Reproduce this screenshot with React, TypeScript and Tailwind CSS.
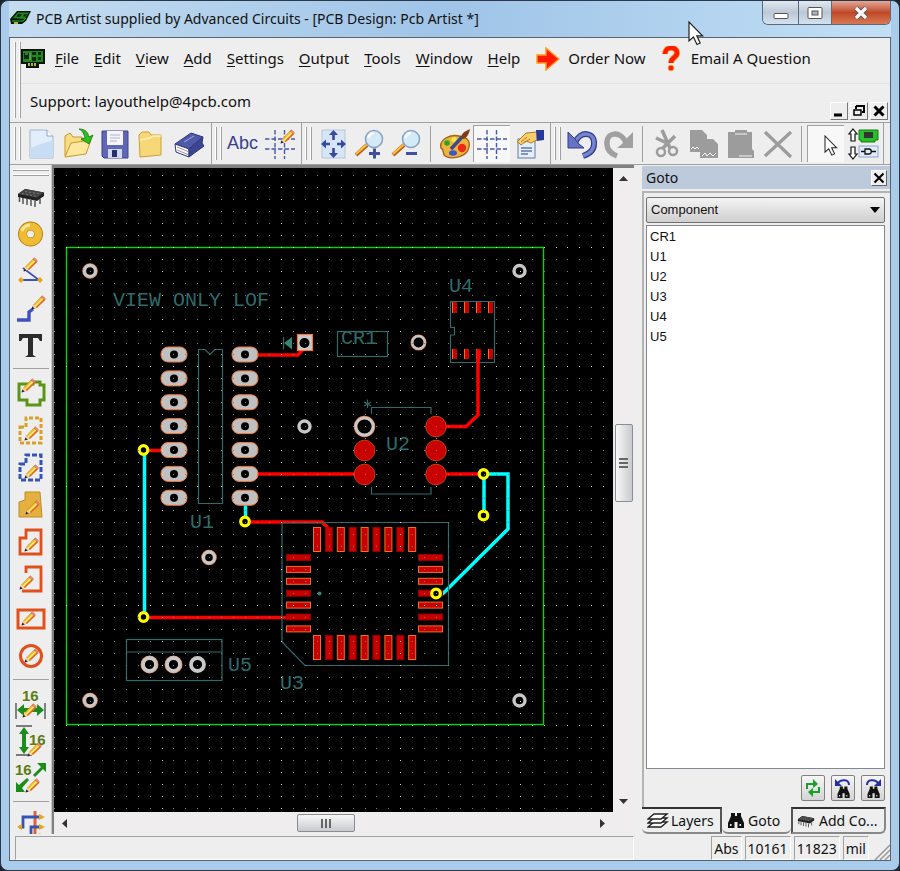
import type { ReactNode } from 'react'

const menuItems = ['File', 'Edit', 'View', 'Add', 'Settings', 'Output', 'Tools', 'Window', 'Help']
const components = ['CR1', 'U1', 'U2', 'U3', 'U4', 'U5']

/* ---------- small shared parts ---------- */

function Grip() {
  return (
    <div className="flex shrink-0 gap-[3px] self-stretch py-1">
      <span className="w-[2px] border-l border-white bg-[#a0a0a0]" />
      <span className="w-[2px] border-l border-white bg-[#a0a0a0]" />
    </div>
  )
}

function Tool({ label, pressed, children }: { label: string; pressed?: boolean; children: ReactNode }) {
  return (
    <button
      type="button"
      aria-label={label}
      className={
        pressed
          ? 'flex h-[37px] w-[37px] shrink-0 items-center justify-center border-t border-l border-[#a0a0a0] bg-[#f8f8f8]'
          : 'flex h-[37px] w-[37px] shrink-0 items-center justify-center'
      }
    >
      <svg width="32" height="32" viewBox="0 0 32 32">{children}</svg>
    </button>
  )
}

function VSep() {
  return <span className="mx-[5px] h-9 w-px shrink-0 bg-[#a0a0a0]" />
}

function HSep() {
  return <span className="my-[5px] h-px w-9 shrink-0 bg-[#a0a0a0]" />
}

/* A pencil with its tip at (x, y), drawn up and to the right */
function Pencil({ x, y }: { x: number; y: number }) {
  return (
    <g transform={`translate(${x} ${y})`}>
      <path d="M0 0 L1.5 -4 L9 -12 L12.5 -9 L4.5 -1.5 Z" fill="#f9c21c" stroke="#c8791a" strokeWidth="0.6" />
      <path d="M3 -2.6 L11 -10.6" stroke="#fff0a0" strokeWidth="1.2" />
      <path d="M4.4 -1.5 L12.4 -9.2" stroke="#e8601c" strokeWidth="1.4" />
      <path d="M9 -12 L10.4 -13.2 L13.6 -10.2 L12.5 -9 Z" fill="#f0907c" stroke="#c8503c" strokeWidth="0.5" />
      <path d="M0 0 L1.5 -4 L4.5 -1.5 Z" fill="#f3d9a8" />
      <path d="M-0.5 0.5 L0.5 -2.4 L2.6 -0.6 Z" fill="#1b1b4a" />
    </g>
  )
}

function Cursor() {
  return <path d="M0 0 V19 L4.4 15 L8 22.5 L11.2 21 L7.8 13.8 H13.6 Z" fill="#fff" stroke="#222" strokeWidth="1.2" />
}

function Chip() {
  return (
    <>
      <path d="M3 13 L10 8 L29 11.5 V15 L22 20 L3 16 Z" fill="#222" />
      <path d="M3 13 L10 8 L29 11.5 L22 16.5 Z" fill="#444" />
      <path d="M4.5 16 V21 M8 17 V23 M12 18 V24 M16 19 V25 M20 20 V26 M25 18 V23" stroke="#555" strokeWidth="1.5" />
      <path d="M7 12.5 L22 15.5 M10 10.5 L26 13" stroke="#888" strokeWidth="0.8" strokeDasharray="2 2" />
    </>
  )
}

function Binoculars() {
  return (
    <path
      d="M5 2 H9 V5 H11 V2 H15 V5 L18 12 V17 H11.5 V11 H8.5 V17 H2 V12 L5 5 Z M4 13 V15 H5.5 V13 Z M13.5 13 V15 H15 V13 Z"
      fill="#111"
      fillRule="evenodd"
    />
  )
}

function DashGrid() {
  return (
    <g stroke="#4858a8" strokeWidth="1.4" strokeDasharray="4.5 2">
      <path d="M11 2 V31" />
      <path d="M20.5 2 V31" />
      <path d="M1 11 H31" />
      <path d="M1 21 H31" />
    </g>
  )
}

function Lens({ plus }: { plus?: boolean }) {
  return (
    <>
      <path d="M2 27 L13 17" stroke="#b8601c" strokeWidth="4" />
      <path d="M2 26 L12.5 16.8" stroke="#ffc23a" strokeWidth="2" />
      <circle cx="20" cy="11" r="8.5" fill="#d4eaf8" stroke="#8aa4c4" strokeWidth="1.6" />
      <path d="M14.5 10 A6 6 0 0 1 20 5" fill="none" stroke="#fff" strokeWidth="2.4" />
      <path d="M15 25.5 H26" stroke="#4050a0" strokeWidth="3" />
      {plus && <path d="M20.5 20.5 V30.5" stroke="#4050a0" strokeWidth="3" />}
    </>
  )
}

/* ---------- title bar ---------- */

function TitleBar() {
  return (
    <header className="relative flex h-9 shrink-0 items-center bg-linear-to-r from-[#c4dcf0] via-[#9fc4e8] to-[#c2dff5] pl-[1px]">
      <svg className="mb-[2px]" width="22" height="16" viewBox="0 0 22 16">
        <path d="M0 9 L7 1 H21 L16 11 L12 14 H1 Z" fill="#0a1a0a" />
        <path d="M3 8 L8 2.5 H19 L14.5 9 Z" fill="#1c8a1c" />
        <path d="M8 4 H12 L10 7 H6.5 Z M14 4 H17 L15.5 6.5 H13 Z" fill="#0a2a0a" />
        <path d="M2 11 H13 L16 8" fill="none" stroke="#22b022" />
        <path d="M4 13 H8" stroke="#e8e030" strokeWidth="1.6" />
      </svg>
      <h1 className="ml-1 truncate pb-[2px] text-[14px] text-[#111]">
        PCB Artist supplied by Advanced Circuits - [PCB Design: Pcb Artist *]
      </h1>
      <div className="ml-auto flex h-6 shrink-0 self-start overflow-hidden rounded-b-md border border-t-0 border-[#5c6a7c]">
        <button type="button" aria-label="Minimize" className="flex w-[35px] items-center justify-center bg-linear-to-b from-[#e0e8f0] via-[#bcc8d6] to-[#d4e2ee]">
          <svg width="16" height="16" viewBox="0 0 16 16">
            <rect x="1" y="8.5" width="14" height="5" rx="1" fill="#fff" stroke="#555" />
          </svg>
        </button>
        <button type="button" aria-label="Maximize" className="flex w-[34px] items-center justify-center border-x border-[#5c6a7c] bg-linear-to-b from-[#e0e8f0] via-[#bcc8d6] to-[#d4e2ee]">
          <svg width="16" height="16" viewBox="0 0 16 16">
            <rect x="1" y="2.5" width="14" height="11" rx="1" fill="#fff" stroke="#555" />
            <rect x="5" y="6" width="6" height="4" fill="#a8b8cc" stroke="#555" />
          </svg>
        </button>
        <button type="button" aria-label="Close" className="flex w-[58px] items-center justify-center bg-linear-to-b from-[#e0a898] via-[#c04828] to-[#d87850]">
          <svg width="16" height="16" viewBox="0 0 16 16">
            <path d="M3 3 L13 13 M13 3 L3 13" stroke="#555" strokeWidth="5" />
            <path d="M3 3 L13 13 M13 3 L3 13" stroke="#fff" strokeWidth="3.2" />
          </svg>
        </button>
      </div>
      {/* mouse pointer resting over the frame */}
      <svg className="absolute top-5 right-[186px] z-10" width="17" height="26" viewBox="-1 -1 17 26">
        <Cursor />
      </svg>
    </header>
  )
}

/* ---------- menu bar ---------- */

function MdiButton({ label, children }: { label: string; children: ReactNode }) {
  return (
    <button type="button" aria-label={label} className="flex h-[18px] w-[18px] items-center justify-center border border-t-white border-r-[#777] border-b-[#777] border-l-white bg-[#eee]">
      <svg width="14" height="14" viewBox="0 0 14 14" fill="none" stroke="#000" strokeWidth="2">{children}</svg>
    </button>
  )
}

function MenuBar() {
  return (
    <div className="flex shrink-0 border-b border-[#a0a0a0] pl-1">
      <Grip />
      <div className="min-w-0 flex-1">
        <nav className="flex h-[46px] items-center border-b border-[#e4e4e4] pb-1 whitespace-nowrap">
          <svg className="mr-[10px] shrink-0" width="24" height="20" viewBox="0 0 24 20">
            <path d="M0 0 H24 V15 H18 V19 H5 V15 H0 Z" fill="#0a140a" />
            <rect x="2" y="2" width="20" height="11" fill="#1c8a1c" />
            <path d="M3 4 H8 V10 H3 Z M11 3 H15 V6 H11 Z M17 3 H20 V6 H17 Z M11 8 H15 V12 H11 Z M17 8 H20 V11 H17 Z" fill="#0a2a0a" />
            <path d="M4 5 H7 M9 4 V11" stroke="#9a9a9a" />
            <path d="M8 14 V17 M11 14 V17 M14 14 V17" stroke="#e8d820" strokeWidth="1.6" />
          </svg>
          <div className="flex gap-[15px]">
            {menuItems.map((item) => (
              <button type="button" key={item}>
                <span className="underline underline-offset-2">{item[0]}</span>
                {item.slice(1)}
              </button>
            ))}
          </div>
          <button type="button" className="ml-4 flex items-center gap-2">
            <svg width="24" height="24" viewBox="0 0 24 24">
              <path d="M1 8 H10 V1 L23 12 L10 23 V16 H1 Z" fill="#ff1a00" stroke="#ff9a1c" strokeWidth="1.4" />
            </svg>
            Order Now
          </button>
          <button type="button" className="ml-[13px] flex items-center gap-2">
            <svg width="24" height="26" viewBox="0 0 24 26">
              <path d="M6 8 C6 0 18 0 18 7 C18 12 12 11 12 17" fill="none" stroke="#ff9a1c" strokeWidth="6" />
              <path d="M6 8 C6 0 18 0 18 7 C18 12 12 11 12 17" fill="none" stroke="#ff1a00" strokeWidth="4.4" />
              <circle cx="12" cy="22" r="2.8" fill="#ff1a00" stroke="#ff9a1c" strokeWidth="0.8" />
            </svg>
            Email A Question
          </button>
        </nav>
        <div className="flex h-[38px] items-center">
          <span className="ml-[9px] pb-1">Support: layouthelp@4pcb.com</span>
          <div className="mr-[2px] mb-[2px] ml-auto flex gap-[2px] self-end">
            <MdiButton label="Minimize document">
              <path d="M2 11 H10" strokeWidth="3" />
            </MdiButton>
            <MdiButton label="Restore document">
              <path d="M4 2 H12 V8 H10 M4 2 V5" />
              <rect x="2" y="6" width="7" height="5" strokeWidth="1.5" />
            </MdiButton>
            <MdiButton label="Close document">
              <path d="M2.5 2.5 L11.5 11.5 M11.5 2.5 L2.5 11.5" strokeWidth="3" />
            </MdiButton>
          </div>
        </div>
      </div>
    </div>
  )
}

/* ---------- top toolbar ---------- */

function Toolbar() {
  return (
    <div className="flex h-[42px] shrink-0 items-center overflow-hidden border-b border-[#a0a0a0] pl-1">
      <Grip />
      <div className="flex pr-1 pl-[1px]">
        <Tool label="New">
          <path d="M5 2 H22 L28 8 V30 H5 Z" fill="#e2eefb" stroke="#a4b4cc" />
          <path d="M5 20 L28 12 V30 H5 Z" fill="#c8dcf4" />
          <path d="M22 2 V8 H28" fill="#fff" stroke="#8ca4c4" />
        </Tool>
        <Tool label="Open">
          <path d="M3 28 V8 L8 5 L11 9 H20 V14" fill="#f7dc82" stroke="#c89a28" />
          <path d="M3 29 L9 15 L29 12 L24 26 Z" fill="#fbe79e" stroke="#c89a28" />
          <path d="M17 1 C24 1 26 5 27 9 L31 7 L27 16 L19 11 L23 10 C22 6 21 3 17 1 Z" fill="#2cc01c" stroke="#14700c" strokeWidth="0.8" />
        </Tool>
        <Tool label="Save">
          <path d="M3 3 H29 V30 H5 L3 28 Z" fill="#5f66b4" stroke="#3c4290" />
          <rect x="8" y="3" width="16" height="14" fill="#f4f4fa" />
          <path d="M11 7 H21 M11 10 H21 M11 13 H18" stroke="#b0b4c8" />
          <rect x="9" y="21" width="14" height="9" fill="#d4d8ec" />
          <rect x="13" y="22" width="5" height="7" fill="#28306c" />
        </Tool>
        <Tool label="Library">
          <path d="M3 7 L6 4 H13 L15 7 H25 V27 L4 29 Z" fill="#f7d878" stroke="#cf9f2c" />
          <path d="M4 12 L14 10 L17 8 H25" fill="none" stroke="#fff0b8" strokeWidth="1.5" />
        </Tool>
        <Tool label="Book">
          <path d="M2 16 L18 5 L30 9 L16 21 Z" fill="#5058a8" stroke="#30367c" />
          <path d="M2 16 L16 21 V29 L3 24 Z" fill="#fff" stroke="#30367c" />
          <path d="M16 21 L30 9 L29 15 L31 18 L16 29 Z" fill="#3c4494" stroke="#30367c" />
          <path d="M4 19 L15 23.5 M4 22 L15 26.5" stroke="#999" />
          <path d="M11 14 L21 8" stroke="#a4acdc" />
        </Tool>
      </div>
      <span className="h-full w-px shrink-0 bg-[#a0a0a0]" />
      <div className="flex self-stretch pl-[3px]">
        <Grip />
      </div>
      <div className="flex pl-[2px]">
        <button type="button" aria-label="Text" className="flex h-[37px] w-[37px] shrink-0 items-center justify-center font-['Liberation_Sans',sans-serif] text-[18px] text-[#34408f]">
          Abc
        </button>
        <Tool label="Snap grid">
          <DashGrid />
          <Pencil x={17} y={15} />
        </Tool>
      </div>
      <span className="ml-[3px] h-full w-px shrink-0 bg-[#a0a0a0]" />
      <div className="flex self-stretch pl-[3px]">
        <Grip />
      </div>
      <div className="flex items-center pl-[2px]">
        <Tool label="Fit view">
          <rect x="5" y="2" width="23" height="28" fill="#d6e6f8" stroke="#b4c4dc" />
          <path d="M16.5 2 L21 7 H12 Z M16.5 30 L21 25 H12 Z M4 16 L9 11.5 V20.5 Z M29 16 L24 11.5 V20.5 Z" fill="#3848a0" />
          <path d="M16.5 6 V12 M16.5 20 V26 M8 16 H13 M20 16 H25" stroke="#3848a0" strokeWidth="2.6" />
        </Tool>
        <Tool label="Zoom in">
          <Lens plus />
        </Tool>
        <Tool label="Zoom out">
          <Lens />
        </Tool>
        <VSep />
        <Tool label="Colours">
          <path d="M2 20 C0 12 10 6 20 8 C30 9 32 15 29 22 C26 29 12 32 6 28 C3 26 6 22 2 20 Z" fill="#f0b43c" stroke="#a0641c" strokeWidth="1.4" />
          <circle cx="8" cy="15" r="2.8" fill="#28a428" />
          <circle cx="15" cy="11.5" r="2.6" fill="#f4e840" />
          <circle cx="23" cy="20" r="4.2" fill="#f02818" />
          <ellipse cx="14" cy="25" rx="4" ry="2.8" fill="#3858d0" />
          <path d="M12 21 L23 9" stroke="#3c4890" strokeWidth="3.5" />
          <path d="M22 10 C23 4 27 3 31 1 C30 6 28 10 24 11 Z" fill="#7c4018" />
        </Tool>
        <Tool label="Grid" pressed>
          <DashGrid />
        </Tool>
        <Tool label="Properties">
          <rect x="5" y="11" width="17" height="19" fill="#e4effc" stroke="#6478a8" />
          <path d="M8 20 H19 M8 23 H19 M8 26 H15" stroke="#6478a8" strokeWidth="1.3" />
          <path d="M4 14 L13 5 L24 4 V12 L18 15 L13 13 L8 17 L6 15 Z" fill="#f8cf6c" stroke="#b07c20" />
          <path d="M8 14 L14 9 M11 15 L17 11" stroke="#b07c20" />
          <path d="M23 2 H31 V12 L24 13 Z" fill="#28389c" />
        </Tool>
      </div>
      <span className="ml-[3px] h-full w-px shrink-0 bg-[#a0a0a0]" />
      <div className="flex self-stretch pl-[3px]">
        <Grip />
      </div>
      <div className="flex items-center pl-[2px]">
        <Tool label="Undo">
          <path d="M9 15 C14 2 29 4 28 16 C28 23 23 26 17 28" fill="none" stroke="#303c8c" strokeWidth="6" />
          <path d="M9 15 C14 2 29 4 28 16 C28 23 23 26 17 28" fill="none" stroke="#7684d0" strokeWidth="3.5" />
          <path d="M2 4 V20 H18 L13 16 L8 10 Z" fill="#6674c4" stroke="#303c8c" />
        </Tool>
        <Tool label="Redo">
          <path d="M23 15 C18 2 3 4 4 16 C4 23 9 26 14 28" fill="none" stroke="#a0a0a0" strokeWidth="5.5" />
          <path d="M30 4 V20 H14 L19 16 L24 10 Z" fill="#a0a0a0" />
        </Tool>
        <VSep />
        <Tool label="Cut">
          <path d="M11 2 L19 20 M24 8 L12 20 M5 10 L18 16" stroke="#9c9c9c" strokeWidth="3.5" />
          <circle cx="10" cy="24" r="4" fill="none" stroke="#9c9c9c" strokeWidth="2.5" />
          <circle cx="22" cy="23" r="4" fill="none" stroke="#9c9c9c" strokeWidth="2.5" />
        </Tool>
        <Tool label="Copy">
          <path d="M2 2 H14 L19 7 V11 H25 L30 16 V30 H12 V24 H2 Z" fill="#9c9c9c" />
          <path d="M3 21 L5 19 L7 21 L9 19 L11 21 M14 28 L17 25 L19 28 L22 25 L25 28 L28 25" fill="none" stroke="#fff" />
        </Tool>
        <Tool label="Paste">
          <path d="M3 4 H10 V2 H22 V4 H27 V21 L29 23 V30 H13 L11 30 H3 Z" fill="#9c9c9c" />
          <path d="M10 6 H22 M14 28 H27" stroke="#f4f4f4" strokeWidth="1.2" />
        </Tool>
        <Tool label="Delete">
          <path d="M3 4 L29 29 M29 4 L3 28" stroke="#9c9c9c" strokeWidth="3.2" />
        </Tool>
        <VSep />
        <Tool label="Select" pressed>
          <g transform="translate(15 8) scale(0.85)">
            <Cursor />
          </g>
        </Tool>
        <Tool label="Swap view">
          <path d="M6 1 L10 6 H8 V13 H4 V6 H2 Z M6 31 L10 26 H8 V19 H4 V26 H2 Z" fill="#fff" stroke="#111" strokeWidth="1.2" />
          <path d="M12 2 H31 V12 H28 V14 H14 V12 H12 Z" fill="#28c028" stroke="#147814" />
          <rect x="17" y="4" width="9" height="6" fill="#333" />
          <rect x="12" y="18" width="19" height="11" fill="#e0ecfa" stroke="#8ca4cc" />
          <path d="M14 23.5 H18 M18 21 V26 H22 C25 26 25 21 22 21 Z M24 23.5 H29" fill="none" stroke="#111" strokeWidth="1.3" />
        </Tool>
      </div>
      <span className="ml-[2px] h-full w-px shrink-0 bg-[#a0a0a0]" />
    </div>
  )
}

/* ---------- left palette ---------- */

function Palette() {
  return (
    <aside className="flex w-[42px] shrink-0 flex-col items-center overflow-hidden border-r border-[#c8c8c8] pt-1">
      <div className="flex shrink-0 flex-col gap-[3px] pb-[2px]">
        <span className="h-[2px] w-9 border-t border-white bg-[#a0a0a0]" />
        <span className="h-[2px] w-9 border-t border-white bg-[#a0a0a0]" />
      </div>
      <Tool label="Add component">
        <Chip />
      </Tool>
      <Tool label="Add pad">
        <circle cx="15.5" cy="16" r="8" fill="none" stroke="#b07c10" strokeWidth="9" />
        <circle cx="15.5" cy="16" r="7.8" fill="none" stroke="#f0bc34" strokeWidth="7.6" />
        <path d="M7 13 A9 9 0 0 1 15 7" fill="none" stroke="#fce498" strokeWidth="3" />
      </Tool>
      <Tool label="Add connection">
        <path d="M8 13 L24 25 H8" fill="none" stroke="#3c50c0" strokeWidth="1.8" />
        <path d="M6 22 L9 25 L6 28 L3 25 Z M25 22 L28 25 L25 28 L22 25 Z" fill="#e8a818" />
        <Pencil x={9} y={16} />
      </Tool>
      <Tool label="Add track">
        <path d="M2 28 H14 V20 L18 17" fill="none" stroke="#3c50c0" strokeWidth="3.4" />
        <Pencil x={17} y={17} />
      </Tool>
      <Tool label="Add text">
        <path d="M4 5 H27 V12 H25 L23 9 H18 V26 L21 28 H10 L13 26 V9 H8 L6 12 H4 Z" fill="#2c2c2c" />
      </Tool>
      <HSep />
      <Tool label="Board outline">
        <path d="M4 7 H18 V5 H25 V8 H29 V23 H25 V28 H12 V23 H4 Z" fill="none" stroke="#5c9418" strokeWidth="3" />
        <Pencil x={7} y={15} />
      </Tool>
      <Tool label="Copper pour">
        <path d="M5 13 H11 V4 H26 V29 H5 Z" fill="none" stroke="#d8a028" strokeWidth="3" strokeDasharray="4 2" />
        <Pencil x={10} y={26} />
      </Tool>
      <Tool label="Keep out area">
        <path d="M5 13 H11 V4 H26 V29 H5 Z" fill="none" stroke="#3454b8" strokeWidth="3" strokeDasharray="5 2" />
        <Pencil x={10} y={27} />
      </Tool>
      <Tool label="Copper shape">
        <path d="M4 14 L10 12 V4 H25 L27 29 H4 Z" fill="#e4b040" stroke="#c08c20" />
        <Pencil x={11} y={26} />
      </Tool>
      <Tool label="Closed shape">
        <path d="M5 13 H11 V5 H26 V29 H5 Z" fill="none" stroke="#e0501c" strokeWidth="2.8" />
        <Pencil x={10} y={26} />
      </Tool>
      <Tool label="Open shape">
        <path d="M11 11 V5 H26 V29 H7" fill="none" stroke="#e0501c" strokeWidth="2.8" />
        <Pencil x={5} y={27} />
      </Tool>
      <span className="h-1 shrink-0" />
      <Tool label="Rectangle">
        <rect x="3" y="7" width="26" height="18" fill="none" stroke="#e0501c" strokeWidth="3" />
        <Pencil x={7} y={22} />
      </Tool>
      <Tool label="Circle">
        <circle cx="16" cy="16" r="10.5" fill="none" stroke="#e0501c" strokeWidth="3" />
        <Pencil x={10} y={22} />
      </Tool>
      <HSep />
      <Tool label="Horizontal dimension">
        <path d="M1 15 V31 M30 15 V31" stroke="#555" strokeWidth="1.4" />
        <path d="M2 22 L9 16 V20 H22 V16 L29 22 L22 28 V24 H9 V28 Z" fill="#1c8c1c" />
        <Pencil x={8} y={29} />
        <text x="7" y="13" fontSize="15" fontWeight="bold" fill="#5c7c14" fontFamily="Liberation Sans, sans-serif">16</text>
      </Tool>
      <Tool label="Vertical dimension">
        <path d="M1 1 H17 M1 30 H17" stroke="#555" strokeWidth="1.4" />
        <path d="M9 2 L14 9 H11 V22 H14 L9 29 L4 22 H7 V9 H4 Z" fill="#1c8c1c" />
        <text x="14" y="20" fontSize="15" fontWeight="bold" fill="#5c7c14" fontFamily="Liberation Sans, sans-serif">16</text>
        <Pencil x={13} y={31} />
      </Tool>
      <Tool label="Angled dimension">
        <text x="0" y="13" fontSize="15" fontWeight="bold" fill="#5c7c14" fontFamily="Liberation Sans, sans-serif">16</text>
        <path d="M31 1 V10 L28 7 L20 15 L18 13 L26 5 L22 1 Z M1 30 V20 L4 23 L12 16 L14 18 L7 26 L10 30 Z" fill="#1c8c1c" />
        <Pencil x={11} y={30} />
      </Tool>
      <HSep />
      <Tool label="Autoroute">
        <path d="M20 1 V29" stroke="#e8602c" strokeWidth="3" />
        <path d="M4 17 H8 V7 H27 M4 26 H16 V17 H27" fill="none" stroke="#3454b8" strokeWidth="2.8" />
        <path d="M24 4 L30 7 L24 10 Z M24 14 L30 17 L24 20 Z M24 23 L30 26 L24 29 Z M7 14 L2 17 L7 20 Z" fill="#e8a818" />
      </Tool>
    </aside>
  )
}

/* ---------- board canvas ---------- */

const PITCH = 11.94
const silk = '#2f6b6b'

function GridDots() {
  const dots: ReactNode[] = []
  for (let row = -7; row < 140; row++) {
    for (let col = -1; col < 160; col++) {
      const bright = row % 10 === 0 || (col - 8) % 10 === 0
      dots.push(
        <rect
          key={`${row}:${col}`}
          x={Math.round(66 + col * PITCH)}
          y={Math.round(247 + row * PITCH)}
          width="1"
          height="1"
          fill={bright ? '#d8d8d8' : '#7c7c7c'}
        />,
      )
    }
  }
  return <g shapeRendering="crispEdges">{dots}</g>
}

function OvalPad({ x, y }: { x: number; y: number }) {
  return (
    <g>
      <rect x={x - 13} y={y - 7.5} width="26" height="15" rx="7" fill="#c0c0c0" stroke="#f07838" strokeWidth="1" />
      <circle cx={x} cy={y} r="4" fill="#000" />
    </g>
  )
}

function Hole({ x, y, r = 5.5, w = 3.4, ring }: { x: number; y: number; r?: number; w?: number; ring?: boolean }) {
  return (
    <g fill="none">
      {ring && <circle cx={x} cy={y} r={r + w / 2} stroke="#f07838" strokeWidth="1.2" />}
      <circle cx={x} cy={y} r={r} stroke="#c8c8c8" strokeWidth={w} />
    </g>
  )
}

function Via({ x, y }: { x: number; y: number }) {
  return <circle cx={x} cy={y} r="4.3" fill="#000" stroke="#ffff00" strokeWidth="3.2" />
}

function SmdPad({ x, y, w, h, edge }: { x: number; y: number; w: number; h: number; edge?: boolean }) {
  return (
    <rect x={x} y={y} width={w} height={h} fill="#c80000" stroke={edge ? '#f07020' : '#900000'} strokeWidth="1" />
  )
}

const seven = [0, 1, 2, 3, 4, 5, 6]
const nine = [0, 1, 2, 3, 4, 5, 6, 7, 8]

function Board() {
  return (
    <svg className="block size-full" role="img" aria-label="Board layout">
      <g transform="translate(-54 -168)">
        <rect x="66.5" y="247.5" width="477" height="477" fill="none" stroke="#00d800" strokeWidth="1.4" />

        {/* silkscreen */}
        <g fill="none" stroke={silk} strokeWidth="1.2">
          <path d="M198.5 349.5 H205 L210 354.5 L215 349.5 H222.5 V503.5 H198.5 Z" />
          <rect x="337.5" y="331.5" width="50" height="25" />
          <path d="M450.5 301.5 H494.5 V362.5 H450.5 V335 H454.5 V327.5 H450.5 Z" />
          <path d="M371.5 414 V407.5 H431 V414 M371.5 487 V494 H431 V487 M367.5 399.5 V408 M364 402 L371 406 M371 402 L364 406" />
          <rect x="126.5" y="639.5" width="95.5" height="41" />
          <path d="M126.5 652 H222" />
          <path d="M283.5 337 V349.5" />
        </g>
        <path d="M284 343 L292 337 V349.5 Z" fill="#3c8474" />
        <g fill={silk} fontFamily="Liberation Mono, monospace" fontSize="20">
          <text x="113" y="306">VIEW ONLY LOF</text>
          <text x="341" y="344">CR1</text>
          <text x="449" y="292">U4</text>
          <text x="386" y="450">U2</text>
          <text x="190" y="528">U1</text>
          <text x="228" y="671">U5</text>
          <text x="280" y="689">U3</text>
        </g>

        {/* top copper */}
        <g fill="none" stroke="#ff0000" strokeWidth="3.5">
          <path d="M258 355 H298 L304 348" />
          <path d="M144 450.5 H161" />
          <path d="M258 474 H356" />
          <path d="M245 522 H322 L328 528" />
          <path d="M144 617.5 H287" />
          <path d="M446 426.5 H466 L478 415 V356" />
          <path d="M446 474 H484" />
        </g>
        {/* bottom copper */}
        <g fill="none" stroke="#00ffff" strokeWidth="3.5">
          <path d="M144.5 450 V617" />
          <path d="M245.5 504 V521" />
          <path d="M484 474 V515" />
          <path d="M484 474 H508 V529 L443 593.5 H437" />
        </g>

        {seven.map((i) => (
          <OvalPad key={`l${i}`} x={174} y={354.5 + i * 2 * PITCH} />
        ))}
        {seven.map((i) => (
          <OvalPad key={`r${i}`} x={245} y={354.5 + i * 2 * PITCH} />
        ))}

        {nine.map((i) => (
          <g key={i}>
            <SmdPad x={313.5 + i * 11.9} y={527.5} w={7} h={24} edge={i % 2 === 0} />
            <SmdPad x={313.5 + i * 11.9} y={635.5} w={7} h={24} edge={i % 2 === 0} />
          </g>
        ))}
        {seven.map((i) => (
          <g key={i}>
            <SmdPad x={286.5} y={554.5 + i * 11.9} w={24} h={6} edge={[1, 2, 4, 6].includes(i)} />
            <SmdPad x={418.5} y={554.5 + i * 11.9} w={24} h={6} edge={[1, 2, 4, 6].includes(i)} />
          </g>
        ))}
        <path d="M282 522.5 H448.5 V665.5 H305 L282 642 Z" fill="none" stroke={silk} strokeWidth="1.2" />
        <circle cx="319.5" cy="593.5" r="2" fill="#3c8474" />

        {[452, 464, 476, 488].map((x) => (
          <g key={x}>
            <rect x={x} y="302" width="5" height="11" fill="#c80000" />
            <rect x={x} y="349" width="5" height="10" fill="#c80000" />
            <path d={`M${x + 0.5} 302 V313 M${x + 0.5} 349 V359`} stroke="#f07020" />
          </g>
        ))}
        <path d="M478 350 V362" stroke="#ff0000" strokeWidth="3.5" />

        {[[364.5, 450.5], [364.5, 474.5], [436, 426.5], [436, 450.5], [436, 474.5]].map(([x, y]) => (
          <circle key={`${x}-${y}`} cx={x} cy={y} r="10.3" fill="#c80000" stroke="#e05010" strokeWidth="0.8" />
        ))}
        <Hole x={364.5} y={426.5} r={8.6} w={3} ring />

        <rect x="297.5" y="334.5" width="15" height="16" fill="#c8c8c8" stroke="#f07838" strokeWidth="1.2" />
        <circle cx="304.5" cy="343" r="5" fill="#000" />

        <Hole x={90} y={271} ring />
        <Hole x={519.5} y={271} />
        <Hole x={90} y={700.5} ring />
        <Hole x={519.5} y={700.5} />
        <Hole x={304.5} y={426.5} />
        <Hole x={209} y={557.5} ring />
        <Hole x={418.5} y={342.5} r={6.2} w={2.4} ring />
        <Hole x={149.5} y={664.5} r={6.5} w={3.8} ring />
        <Hole x={173.5} y={664.5} r={6.5} w={3.8} ring />
        <Hole x={197.5} y={664.5} r={6.5} w={3.8} />

        <Via x={143.5} y={450} />
        <Via x={143.5} y={617} />
        <Via x={245} y={521.5} />
        <Via x={483.5} y={474} />
        <Via x={483.5} y={515.5} />
        <Via x={436} y={593.5} />
        <GridDots />
      </g>
    </svg>
  )
}

function ScrollArrow({ label, d }: { label: string; d: string }) {
  return (
    <button type="button" aria-label={label} className="flex h-[21px] w-[21px] shrink-0 items-center justify-center">
      <svg width="9" height="9" viewBox="0 0 9 9">
        <path d={d} fill="#333" />
      </svg>
    </button>
  )
}

function Workspace() {
  return (
    <section className="flex min-w-0 flex-1 flex-col border-t-[3px] border-l-2 border-[#808080] bg-[#eee]">
      <div className="flex min-h-0 flex-1">
        <div className="min-w-0 flex-1 overflow-hidden bg-black">
          <Board />
        </div>
        <div className="flex w-[21px] shrink-0 flex-col items-center bg-[#efeded]">
          <ScrollArrow label="Scroll up" d="M0 7 L4.5 2 L9 7 Z" />
          <span className="flex-[235]" />
          <span className="flex h-[78px] w-[18px] flex-col items-center justify-center gap-[2px] rounded-xs border border-[#8c8c94] bg-linear-to-r from-[#f8f8f8] to-[#c8cace]">
            <span className="h-[2px] w-[9px] bg-[#666]" />
            <span className="h-[2px] w-[9px] bg-[#666]" />
            <span className="h-[2px] w-[9px] bg-[#666]" />
          </span>
          <span className="flex-[289]" />
          <ScrollArrow label="Scroll down" d="M0 2 L4.5 7 L9 2 Z" />
        </div>
      </div>
      <div className="flex h-[22px] shrink-0 items-center bg-[#efeded] pr-[1px]">
        <ScrollArrow label="Scroll left" d="M7 0 L2 4.5 L7 9 Z" />
        <span className="flex-[222]" />
        <span className="flex h-[18px] w-[58px] items-center justify-center gap-[2px] rounded-xs border border-[#8c8c94] bg-linear-to-b from-[#f8f8f8] to-[#c8cace]">
          <span className="h-[9px] w-[2px] bg-[#666]" />
          <span className="h-[9px] w-[2px] bg-[#666]" />
          <span className="h-[9px] w-[2px] bg-[#666]" />
        </span>
        <span className="flex-[237]" />
        <ScrollArrow label="Scroll right" d="M2 0 L7 4.5 L2 9 Z" />
        <span className="w-5 shrink-0" />
      </div>
    </section>
  )
}

/* ---------- goto panel ---------- */

function PanelButton({ label, children }: { label: string; children: ReactNode }) {
  return (
    <button type="button" aria-label={label} className="flex h-[26px] w-6 items-center justify-center rounded-xs border border-[#808080] bg-linear-to-b from-[#f6f6f6] to-[#d4d4d4]">
      <svg width="20" height="22" viewBox="0 0 20 22">{children}</svg>
    </button>
  )
}

function GotoPanel() {
  return (
    <section className="ml-2 flex w-[248px] shrink-0 flex-col bg-[#eee] text-[14px]">
      <div className="mt-px flex h-[23px] shrink-0 items-center bg-[#bccadb] pr-[3px] pl-1">
        <h2>Goto</h2>
        <button type="button" aria-label="Close panel" className="ml-auto flex h-4 w-4 items-center justify-center border border-t-white border-r-[#666] border-b-[#666] border-l-white bg-[#eee]">
          <svg width="12" height="12" viewBox="0 0 12 12">
            <path d="M1.5 1.5 L10.5 10.5 M10.5 1.5 L1.5 10.5" stroke="#000" strokeWidth="2" />
          </svg>
        </button>
      </div>
      <div className="mt-[2px] flex min-h-0 flex-1 flex-col border-t-2 border-l-2 border-[#b4b4b4] pt-1 pr-[5px] pb-[6px] pl-[2px]">
        <div className="relative shrink-0">
          <select aria-label="Item type" className="h-[26px] w-full appearance-none rounded-xs border border-[#707070] bg-linear-to-b from-[#f4f4f4] to-[#cfcfcf] pl-1 font-['Liberation_Sans',sans-serif] text-[13px]">
            <option>Component</option>
          </select>
          <svg className="pointer-events-none absolute top-[10px] right-[5px]" width="10" height="6" viewBox="0 0 10 6">
            <path d="M0 0 H10 L5 6 Z" fill="#000" />
          </svg>
        </div>
        <ul className="mt-[2px] min-h-0 flex-1 overflow-hidden border border-[#828790] bg-white pt-px pl-[3px] font-['Liberation_Sans',sans-serif] text-[13px] leading-5">
          {components.map((name) => (
            <li key={name}>{name}</li>
          ))}
        </ul>
        <div className="mt-[6px] flex shrink-0 justify-end gap-[6px]">
          <PanelButton label="Refresh">
            <path d="M3 12 V6 H10 V2 L15 7 L10 11 V8 H5 V12 Z M17 10 V16 H10 V20 L5 15 L10 11 V14 H15 V10 Z" fill="#18a028" />
          </PanelButton>
          <PanelButton label="Find previous">
            <path d="M5 6 C8 2 16 2 16 8" fill="none" stroke="#2430a0" strokeWidth="2" />
            <path d="M2 2 V9 H9 Z" fill="#2430a0" />
            <g transform="translate(3 8) scale(0.76)">
              <Binoculars />
            </g>
          </PanelButton>
          <PanelButton label="Find next">
            <path d="M15 6 C12 2 4 2 4 8" fill="none" stroke="#2430a0" strokeWidth="2" />
            <path d="M18 2 V9 H11 Z" fill="#2430a0" />
            <g transform="translate(3 8) scale(0.76)">
              <Binoculars />
            </g>
          </PanelButton>
        </div>
      </div>
      <div role="tablist" className="flex h-[27px] shrink-0 pr-1">
        <button type="button" role="tab" aria-selected="false" className="flex w-20 items-center gap-[2px] rounded-bl-md border-t-2 border-r-2 border-b-2 border-t-[#333] border-r-[#555] border-b-[#888] pl-[5px] whitespace-nowrap">
          <svg width="22" height="18" viewBox="0 0 22 18" fill="#fff" stroke="#222" strokeWidth="1.4">
            <path d="M1 15 L7 10 H20 L14 15 Z" />
            <path d="M1 11 L7 6 H20 L14 11 Z" />
            <path d="M1 7 L7 2 H20 L14 7 Z" />
          </svg>
          Layers
        </button>
        <button type="button" role="tab" aria-selected="true" className="flex w-[69px] items-center gap-[2px] rounded-b-md border-t-2 border-b-2 border-t-transparent border-b-[#888] pl-1 whitespace-nowrap">
          <svg width="20" height="19" viewBox="0 0 20 19">
            <Binoculars />
          </svg>
          Goto
        </button>
        <button type="button" role="tab" aria-selected="false" className="flex min-w-0 flex-1 items-center gap-[3px] rounded-br-md border-2 border-t-[#333] border-r-[#888] border-b-[#888] border-l-[#555] pl-[3px] whitespace-nowrap">
          <svg width="20" height="20" viewBox="2 0 28 32">
            <Chip />
          </svg>
          Add Co...
        </button>
      </div>
    </section>
  )
}

/* ---------- status bar ---------- */

function Cell({ children }: { children: ReactNode }) {
  return (
    <span className="flex items-center border border-t-[#a0a0a0] border-r-white border-b-white border-l-[#a0a0a0] px-[2px]">
      {children}
    </span>
  )
}

function StatusBar() {
  return (
    <footer className="mt-[2px] flex h-6 shrink-0 gap-[3px] pl-[5px] text-[14px]">
      <span className="mr-[74px] flex-1 border border-t-[#a0a0a0] border-r-white border-b-white border-l-[#a0a0a0]" />
      <Cell>Abs</Cell>
      <Cell>10161</Cell>
      <Cell>11823</Cell>
      <Cell>mil</Cell>
      <svg className="self-end" width="18" height="18" viewBox="0 0 18 18">
        <path d="M3 18 L18 3 M8 18 L18 8 M13 18 L18 13" stroke="#999" strokeWidth="1.5" />
      </svg>
    </footer>
  )
}

export default function App() {
  return (
    <div className="h-screen bg-[#1c2430]">
      <div className="flex h-full flex-col rounded-lg border border-[#2c3848] bg-[#a9cbec] px-2 pb-[9px] font-['Noto_Sans',sans-serif] text-[15px] text-[#111]">
        <TitleBar />
        <div className="flex min-h-0 flex-1 flex-col border border-[#5a6470] bg-[#eee]">
          <MenuBar />
          <Toolbar />
          <main className="flex min-h-0 flex-1">
            <Palette />
            <Workspace />
            <GotoPanel />
          </main>
          <StatusBar />
        </div>
      </div>
    </div>
  )
}
